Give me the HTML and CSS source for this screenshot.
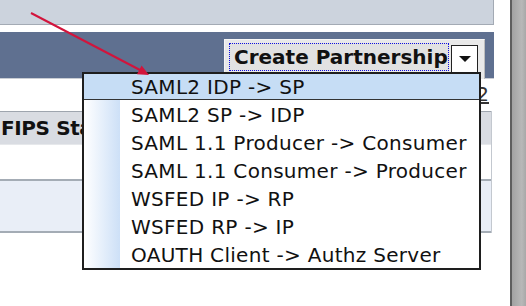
FILE: index.html
```html
<!DOCTYPE html>
<html lang="en">
<head>
    <meta charset="UTF-8">
    <title>Create Partnership</title>
    <link rel="stylesheet" href="styles.css">
</head>
<body>
    <div class="main">
        <div class="topbar"></div>
        <div class="band">
            <div class="select">
                <div class="select-label">Create Partnership</div>
                <div class="select-btn"><span class="caret"></span></div>
            </div>
        </div>
        <div class="pager"><a href="#">2</a></div>
        <div class="table">
            <div class="table-head">FIPS Status</div>
            <div class="table-row"></div>
            <div class="table-row alt"></div>
        </div>
    </div>
    <div class="scrollbar"></div>

    <!-- open dropdown list -->
    <div class="dropdown">
        <div class="option selected">SAML2 IDP -&gt; SP</div>
        <div class="options">
            <div class="option">SAML2 SP -&gt; IDP</div>
            <div class="option">SAML 1.1 Producer -&gt; Consumer</div>
            <div class="option">SAML 1.1 Consumer -&gt; Producer</div>
            <div class="option">WSFED IP -&gt; RP</div>
            <div class="option">WSFED RP -&gt; IP</div>
            <div class="option">OAUTH Client -&gt; Authz Server</div>
        </div>
    </div>

    <svg class="arrow" width="526" height="306" viewBox="0 0 526 306">
        <line x1="31" y1="13" x2="140" y2="70" stroke="#d2143c" stroke-width="2"/>
        <polygon points="149,75 137,74.3 141.6,65.5" fill="#d2143c"/>
    </svg>
</body>
</html>
```

FILE: styles.css
```css
body {
    margin: 0;
    width: 526px;
    height: 306px;
    overflow: hidden;
    display: flex;
    background-color: #fff;
    font-family: "DejaVu Sans", Verdana, sans-serif;
    color: #111;
    position: relative;
}
.main {
    width: 494px;
    flex-shrink: 0;
}
.topbar {
    height: 24px;
    background-color: #ccd3dd;
    border-bottom: 1px solid #a3aab4;
    border-right: 1px solid #a3aab4;
    margin-bottom: 7px;
}
.band {
    height: 47px;
    background-color: #5f7090;
    border-bottom: 1px solid #c9cdd4;
    display: flex;
    justify-content: flex-end;
    align-items: flex-start;
    padding: 7px 9px 0 0;
    box-sizing: border-box;
}
.select {
    display: flex;
    align-items: flex-start;
    width: 261px;
    height: 40px;
    padding: 3px 6px 0 4px;
    box-sizing: border-box;
    background-color: #e9e9e9;
    border-top: 1px solid #f7f7f7;
    border-left: 1px solid #f7f7f7;
    border-right: 1px solid #bdbdbd;
}
.select-label {
    width: 222px;
    height: 28px;
    box-sizing: border-box;
    border: 1px dotted #1010e0;
    background-color: #e2e2e2;
    font-size: 20px;
    font-weight: bold;
    line-height: 26px;
    padding-left: 4px;
    white-space: nowrap;
    overflow: hidden;
    color: #111;
}
.select-btn {
    width: 27px;
    height: 30px;
    margin: 2px 0 0 2px;
    box-sizing: border-box;
    border: 1px solid #222;
    background-color: #fff;
    display: flex;
    justify-content: center;
    padding-top: 10px;
}
.caret {
    width: 0;
    height: 0;
    border-left: 6px solid transparent;
    border-right: 6px solid transparent;
    border-top: 6px solid #111;
}
.pager {
    height: 32px;
    text-align: right;
    padding-right: 5px;
    font-size: 20px;
    line-height: 28px;
    box-sizing: border-box;
    padding-top: 1px;
}
.pager a {
    color: #333;
}
.table {
    width: 491px;
    border-right: 1px solid #c3c8cf;
}
.table-head {
    height: 32px;
    border-top: 1px solid #9ea5ae;
    border-bottom: 1px solid #e6e8eb;
    background-color: #d9dce2;
    font-size: 20px;
    font-weight: bold;
    line-height: 32px;
    letter-spacing: -0.4px;
    padding-left: 1px;
    white-space: nowrap;
    color: #111;
}
.table-row {
    height: 34px;
}
.table-row.alt {
    height: 50px;
    background-color: #e9eef7;
    border-top: 2px solid #a4acb5;
    border-bottom: 2px solid #a4acb5;
}
.scrollbar {
    margin-left: 16px;
    width: 16px;
    border-left: 2px solid #5e5e5e;
    background: linear-gradient(to right, #a2a2a2, #b8b8b8 70%, #a8a8a8);
}
.dropdown {
    position: absolute;
    left: 82px;
    top: 72px;
    width: 399px;
    border: 2px solid #1e1e1e;
    box-sizing: border-box;
    background-color: #fff;
    font-size: 20px;
    letter-spacing: 0.3px;
}
.option {
    height: 28px;
    line-height: 30px;
    padding-left: 47px;
    white-space: nowrap;
}
.option.selected {
    height: 25px;
    line-height: 26px;
    background-color: #c6ddf5;
    border-bottom: 1px solid #333;
}
.options {
    background-image: linear-gradient(to right, #ffffff, #cde0f7);
    background-size: 36px 100%;
    background-repeat: no-repeat;
}
.arrow {
    position: absolute;
    left: 0;
    top: 0;
    pointer-events: none;
}
```
